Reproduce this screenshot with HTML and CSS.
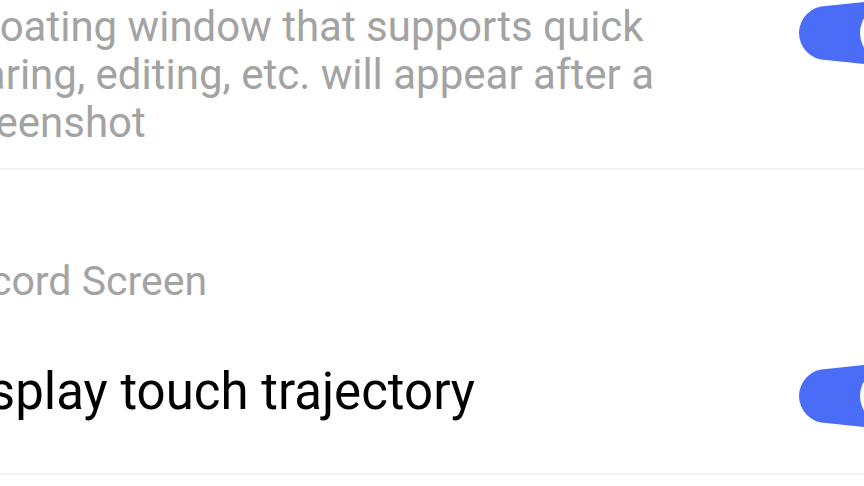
FILE: index.html
```html
<!DOCTYPE html>
<html lang="en">
<head>
<meta charset="utf-8">
<title>Settings</title>
<link rel="stylesheet" href="styles.css">
</head>
<body>
<div class="screen">
  <div class="item item-first">
    <p class="desc">A floating window that supports quick<br>sharing, editing, etc. will appear after a<br>screenshot</p>
    <svg class="toggle toggle-first" width="66" height="66" viewBox="0 0 66 66" aria-hidden="true">
      <path d="M28 6 L66 2 L66 64 L28 60 A27 27 0 0 1 28 6 Z" fill="#4a6cf7"/>
      <circle cx="90" cy="33" r="28" fill="#ffffff"/>
    </svg>
  </div>
  <div class="section-title">Record Screen</div>
  <div class="item item-second">
    <p class="title">Display touch trajectory</p>
    <svg class="toggle toggle-second" width="66" height="66" viewBox="0 0 66 66" aria-hidden="true">
      <path d="M28 6 L66 2 L66 64 L28 60 A27 27 0 0 1 28 6 Z" fill="#4a6cf7"/>
      <circle cx="90" cy="33" r="28" fill="#ffffff"/>
    </svg>
  </div>
</div>
</body>
</html>
```
FILE: styles.css
```css
html, body {
  margin: 0;
  padding: 0;
  background: #ffffff;
}
body {
  width: 864px;
  height: 486px;
  overflow: hidden;
  font-family: Roboto, "Noto Sans", sans-serif;
}
.screen {
  margin-left: -57px;
  width: calc(100% + 57px);
}
.item {
  display: flex;
  justify-content: space-between;
  align-items: flex-start;
  border-bottom: 2px solid #f2f2f2;
}
.item-first {
  padding-top: 3px;
  padding-bottom: 21px;
}
.desc {
  margin: 0 0 0 -5px;
  font-size: 42px;
  line-height: 48px;
  color: #a3a3a3;
}
.toggle {
  flex: none;
  display: block;
}
.toggle-first {
  margin-top: -3px;
}
.section-title {
  padding-top: 87px;
  font-size: 41px;
  line-height: 48px;
  color: #a3a3a3;
}
.item-second {
  padding-top: 57px;
  padding-bottom: 44px;
}
.title {
  margin: 0;
  font-size: 51px;
  line-height: 60px;
  color: #000000;
}
.toggle-second {
  margin-top: 1px;
}
```
